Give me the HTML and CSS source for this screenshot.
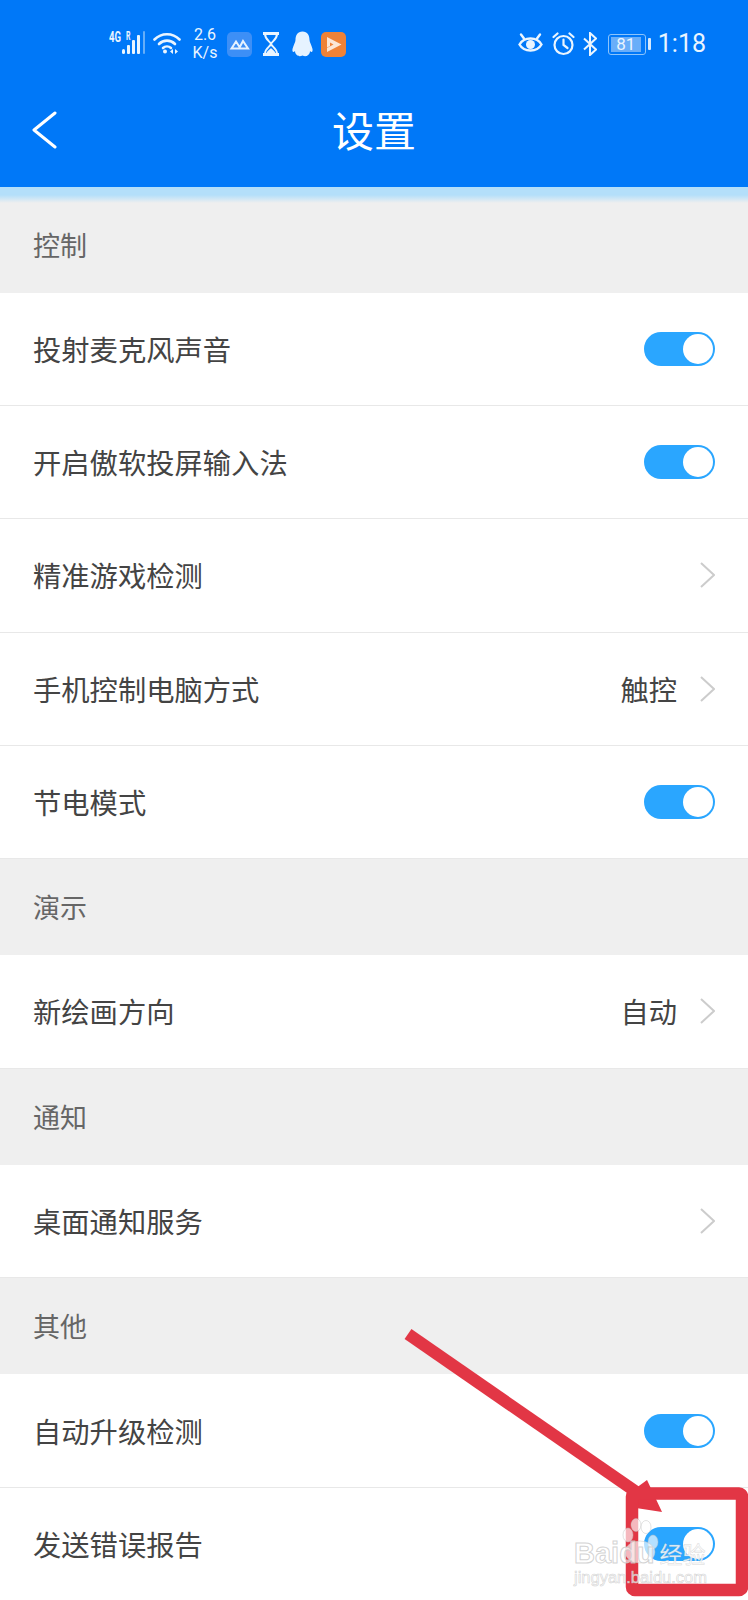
FILE: index.html
```html
<!DOCTYPE html>
<html lang="zh-CN">
<head>
<meta charset="utf-8">
<title>设置</title>
<link rel="stylesheet" href="styles.css">
</head>
<body>
<div class="page">
  <header class="appbar">
    <div class="status">
      <div class="status-left">
        <svg class="ic-signal" width="38" height="32" viewBox="0 -3 38 32">
          <text x="0" y="11" class="net" textLength="12" lengthAdjust="spacingAndGlyphs">4G</text>
          <text x="17" y="9" class="net net-r" textLength="4.500" lengthAdjust="spacingAndGlyphs">R</text>
          <rect x="13" y="18" width="3" height="5" rx="1.500" fill="#eaf5ff"/>
          <rect x="18" y="14" width="3" height="9" rx="1" fill="#eaf5ff"/>
          <rect x="23" y="9" width="3" height="14" rx="1" fill="#eaf5ff"/>
          <rect x="28" y="4" width="3" height="19" rx="1" fill="#eaf5ff"/>
          <rect x="34" y="0" width="2" height="23" rx="1" fill="#66aef8"/>
        </svg>
        <svg class="ic-wifi" width="28" height="24" viewBox="0 0 28 24" fill="none" stroke="#eaf5ff" stroke-width="2.600" stroke-linecap="round">
          <path d="M1.500 7.500 C8.500 .5 19.500 .5 26.500 7.500"/>
          <path d="M6 12 C10.500 7.500 17.500 7.500 22 12"/>
          <path d="M10 16 C12.300 14 15.700 14 18 16"/>
          <circle cx="12" cy="19.500" r="2" fill="#eaf5ff" stroke="none"/>
          <path d="M20 17 l-3 2.500 l3 2.500 z M22 17 l3 2.500 l-3 2.500 z" fill="#eaf5ff" stroke="none"/>
        </svg>
        <div class="speed">2.6<br>K/s</div>
        <svg class="ic-app" width="25" height="25" viewBox="0 0 25 25">
          <rect width="25" height="25" rx="5" fill="#3d8ff6"/>
          <path d="M4.500 16.500 L9 9.500 L13.500 16.500 Z M12 16.500 L16 9 L21 16.500 Z" fill="none" stroke="#e6f2ff" stroke-width="2"/>
        </svg>
        <svg class="ic-glass" width="18" height="24" viewBox="0 0 18 24" fill="none" stroke="#eaf5ff" stroke-width="2">
          <path d="M1 1.500 H17 M1 22.500 H17" stroke-width="3"/>
          <path d="M3 2 C3 8 8.500 9.500 9 12 C9.500 9.500 15 8 15 2"/>
          <path d="M3 22 C3 16 8.500 14.500 9 12 C9.500 14.500 15 16 15 22"/>
          <path d="M4.500 22 C5 18.500 7.500 18 9 16 C10.500 18 13 18.500 13.500 22 Z" fill="#eaf5ff" stroke="none"/>
        </svg>
        <svg class="ic-qq" width="21" height="26" viewBox="0 0 21 26">
          <path d="M10.500 .5 C15.500 .5 17.500 4.500 17.500 9 C17.500 11 19.500 14 20.500 18 C21 21 19.500 22 18 20 C18 22 17 23.500 16 24 C15 25.500 12.500 25.500 10.500 24.500 C8.500 25.500 6 25.500 5 24 C4 23.500 3 22 3 20 C1.500 22 0 21 .5 18 C1.500 14 3.500 11 3.500 9 C3.500 4.500 5.500 .5 10.500 .5 Z" fill="#e6f3ff"/>
        </svg>
        <svg class="ic-video" width="25" height="25" viewBox="0 0 25 25">
          <rect width="25" height="25" rx="5" fill="#ef8237"/>
          <path d="M6 5 L20.500 12.500 L6 20 V16 L12.500 12.500 L9 10.500 V14 L6 15.500 Z" fill="#fbe6d5"/>
        </svg>
      </div>
      <div class="status-right">
        <svg class="ic-eye" width="25" height="24" viewBox="0 0 25 24" fill="none" stroke="#eaf5ff" stroke-width="2.400">
          <path d="M1.500 12.500 C6 4.500 19 4.500 23.500 12.500 C19 20.500 6 20.500 1.500 12.500 Z"/>
          <circle cx="12.500" cy="12.500" r="4.500" fill="#eaf5ff" stroke="none"/>
          <path d="M3 2.500 L6 6.500 M22 2.500 L19 6.500" stroke-linecap="round"/>
        </svg>
        <svg class="ic-alarm" width="23" height="24" viewBox="0 0 23 24" fill="none" stroke="#eaf5ff" stroke-width="2.200">
          <circle cx="11.500" cy="13" r="9"/>
          <path d="M11.500 7.500 V13 L15.500 16" stroke-linecap="round"/>
          <path d="M1.500 5 L5.500 1.500 M21.500 5 L17.500 1.500" stroke-linecap="round"/>
        </svg>
        <svg class="ic-bt" width="14" height="24" viewBox="0 0 14 24" fill="none" stroke="#eaf5ff" stroke-width="2">
          <path d="M1 6.500 L13 17.500 L7 23 V1 L13 6.500 L1 17.500"/>
        </svg>
        <div class="battery">
          <div class="battery-body"><span class="battery-level">81</span></div>
          <div class="battery-cap"></div>
        </div>
        <div class="clock">1:18</div>
      </div>
    </div>
    <div class="nav">
      <svg class="back" width="25" height="38" viewBox="0 0 25 38" fill="none" stroke="#fff" stroke-width="3" stroke-linecap="round" stroke-linejoin="round">
        <path d="M23 2 L2 19 L23 36"/>
      </svg>
      <h1 class="title">设置</h1>
    </div>
  </header>

  <div class="section section-first">控制</div>
  <div class="row"><span class="label">投射麦克风声音</span><span class="toggle"></span></div>
  <div class="row"><span class="label">开启傲软投屏输入法</span><span class="toggle"></span></div>
  <div class="row">
    <span class="label">精准游戏检测</span>
    <svg class="chev" width="17" height="28" viewBox="0 0 17 28"><path d="M3 2 L16 14 L3 26"/></svg>
  </div>
  <div class="row">
    <span class="label">手机控制电脑方式</span>
    <span class="value">触控</span>
    <svg class="chev" width="17" height="28" viewBox="0 0 17 28"><path d="M3 2 L16 14 L3 26"/></svg>
  </div>
  <div class="row row-last"><span class="label">节电模式</span><span class="toggle"></span></div>

  <div class="section">演示</div>
  <div class="row row-last">
    <span class="label">新绘画方向</span>
    <span class="value">自动</span>
    <svg class="chev" width="17" height="28" viewBox="0 0 17 28"><path d="M3 2 L16 14 L3 26"/></svg>
  </div>

  <div class="section">通知</div>
  <div class="row row-last">
    <span class="label">桌面通知服务</span>
    <svg class="chev" width="17" height="28" viewBox="0 0 17 28"><path d="M3 2 L16 14 L3 26"/></svg>
  </div>

  <div class="section">其他</div>
  <div class="row"><span class="label">自动升级检测</span><span class="toggle"></span></div>
  <div class="row row-end"><span class="label">发送错误报告</span><span class="toggle"></span></div>

  <!-- hand-drawn callout pointing at the error report switch -->
  <svg class="callout" width="748" height="1600" viewBox="0 0 748 1600">
    <path d="M408 1334 L645 1498" stroke="#e23645" stroke-width="12" fill="none"/>
    <polygon points="647,1480 662,1512 636,1508 628,1494" fill="#e23645"/>
    <rect x="632" y="1493.500" width="110" height="96.500" rx="3" fill="none" stroke="#e23645" stroke-width="12.500"/>
  </svg>

  <!-- site stamp in the lower corner -->
  <div class="stamp">
    <svg class="paw" width="48" height="50" viewBox="0 0 48 50">
      <g fill="rgba(255,255,255,.65)" stroke="rgba(190,190,190,.45)" stroke-width="1">
        <ellipse cx="8" cy="17" rx="5" ry="7"/>
        <ellipse cx="16" cy="7" rx="5" ry="6.500"/>
        <ellipse cx="26" cy="9" rx="5" ry="6.500"/>
        <ellipse cx="33" cy="24" rx="5" ry="7"/>
        <ellipse cx="20" cy="34" rx="15" ry="11"/>
      </g>
    </svg>
    <div class="stamp-main"><span class="stamp-latin">Baidu</span><span class="stamp-cjk">经验</span></div>
    <div class="stamp-url">jingyan.baidu.com</div>
  </div>
</div>
</body>
</html>
```
FILE: styles.css
```css
* { box-sizing: border-box; }

html, body {
  margin: 0;
  padding: 0;
  background: #fff;
}

body {
  font-family: "Noto Sans CJK SC", "Noto Sans", sans-serif;
  color: #444;
}

.page {
  position: relative;
  width: 748px;
  height: 1600px;
  overflow: hidden;
  background: #fff;
}

/* top bar */
.appbar {
  height: 187px;
  background: #0078f8;
  color: #fff;
}

.status {
  height: 84px;
  display: flex;
  align-items: center;
  justify-content: space-between;
  padding: 4px 42px 0 109px;
  color: #eaf5ff;
}

.status-left,
.status-right {
  display: flex;
  align-items: center;
}

.net {
  font: 700 15px "Roboto", sans-serif;
  fill: #eaf5ff;
}

.net-r { font-size: 12px; }

.ic-wifi { margin-left: 6px; }

.speed {
  width: 26px;
  margin-left: 11px;
  font: 400 16px/18px "Roboto", sans-serif;
  text-align: center;
  white-space: nowrap;
}

.ic-app { margin-left: 9px; }
.ic-glass { margin-left: 10px; }
.ic-qq { margin-left: 12px; }
.ic-video { margin-left: 8px; }

.ic-alarm { margin-left: 9px; }
.ic-bt { margin-left: 8px; }

.battery {
  display: flex;
  align-items: center;
  margin-left: 11px;
}

.battery-body {
  width: 38px;
  height: 21px;
  padding: 2px;
  border: 1.500px solid #8cc4fb;
  border-radius: 3px;
}

.battery-level {
  display: block;
  width: 30px;
  height: 100%;
  background: #69aef9;
  font: 400 17px/14px "Roboto", sans-serif;
  text-align: center;
  color: #eaf5ff;
}

.battery-cap {
  width: 3px;
  height: 12px;
  margin-left: 2px;
  border-radius: 1px;
  background: #d5e9fd;
}

.clock {
  margin-left: 7px;
  font: 400 25px/30px "Roboto", sans-serif;
}

.nav {
  position: relative;
  height: 90px;
  display: flex;
  align-items: center;
  justify-content: center;
}

.back {
  position: absolute;
  left: 32px;
  top: 27px;
}

.title {
  margin: 0;
  font-size: 42px;
  font-weight: 400;
  line-height: 56px;
}

/* group headings */
.section {
  height: 96.400px;
  padding: 30px 0 0 33px;
  background: #efefef;
  font-size: 27px;
  line-height: 36px;
  color: #666;
}

.section-first {
  height: 106px;
  padding-top: 40px;
  background: linear-gradient(#b4dffa 0, #b4dffa 8px, #efefef 16px);
}

/* setting rows */
.row {
  height: 113.200px;
  display: flex;
  align-items: center;
  padding: 0 33px;
  border-bottom: 1px solid #e8e8e8;
  background: #fff;
}

.row-end { border-bottom: 0; }

.label {
  margin-right: auto;
  font-size: 28.300px;
  line-height: 40px;
}

.value {
  margin-right: 21px;
  font-size: 28.300px;
  line-height: 40px;
}

.chev {
  fill: none;
  stroke: #ccc;
  stroke-width: 2;
}

.toggle {
  position: relative;
  width: 71px;
  height: 34px;
  border-radius: 17px;
  background: #2aa6ff;
}

.toggle::after {
  content: "";
  position: absolute;
  top: 2px;
  right: 2px;
  width: 30px;
  height: 30px;
  border-radius: 50%;
  background: #fff;
}

/* overlays */
.callout {
  position: absolute;
  left: 0;
  top: 0;
  pointer-events: none;
}

.stamp {
  position: absolute;
  left: 572px;
  top: 1518px;
  width: 140px;
  height: 70px;
}

.paw {
  position: absolute;
  left: 48px;
  top: 0;
}

.stamp-main {
  position: absolute;
  left: 2px;
  top: 21px;
  height: 28px;
  display: flex;
  white-space: nowrap;
}

.stamp-latin {
  font: 700 29px/28px "Liberation Sans", sans-serif;
  color: rgba(255, 255, 255, .6);
  -webkit-text-stroke: 1px rgba(200, 200, 200, .8);
}

.stamp-cjk {
  margin-left: 5px;
  font-size: 23px;
  line-height: 28px;
  color: rgba(255, 255, 255, .85);
  -webkit-text-stroke: .5px rgba(190, 190, 190, .6);
}

.stamp-url {
  position: absolute;
  left: 2px;
  top: 50px;
  font: 400 16.500px/18px "Liberation Sans", sans-serif;
  color: rgba(255, 255, 255, .7);
  -webkit-text-stroke: .6px rgba(200, 200, 200, .8);
  white-space: nowrap;
}
```
